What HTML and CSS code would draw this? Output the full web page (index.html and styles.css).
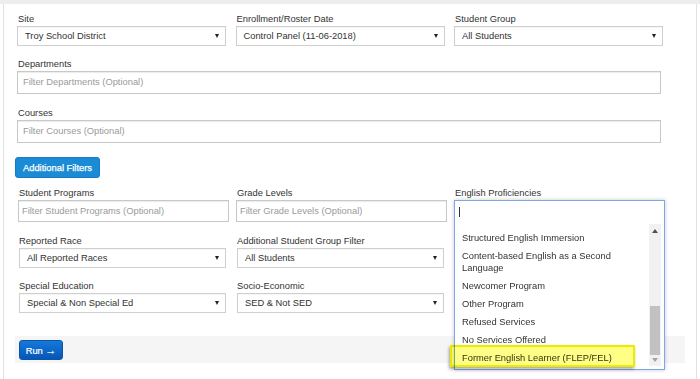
FILE: index.html
```html
<!DOCTYPE html>
<html>
<head>
<meta charset="utf-8">
<link rel="stylesheet" href="styles.css">
</head>
<body>
<div class="topbar"></div>
<div class="frame">
  <div class="row1">
    <div class="field"><label>Site</label><div class="select">Troy School District</div></div>
    <div class="field"><label>Enrollment/Roster Date</label><div class="select">Control Panel (11-06-2018)</div></div>
    <div class="field"><label>Student Group</label><div class="select">All Students</div></div>
  </div>
  <div class="field full departments"><label>Departments</label><div class="input">Filter Departments (Optional)</div></div>
  <div class="field full courses"><label>Courses</label><div class="input">Filter Courses (Optional)</div></div>
  <div class="filters-row"><button class="btn-filters">Additional Filters</button></div>
  <div class="lower">
    <div class="field"><label>Student Programs</label><div class="input">Filter Student Programs (Optional)</div></div>
    <div class="field"><label>Grade Levels</label><div class="input">Filter Grade Levels (Optional)</div></div>
    <div class="field"><label>English Proficiencies</label>
      <div class="dd-wrap">
        <div class="dd">
          <div class="dd-input"><span class="caret"></span></div>
          <div class="dd-list">
            <div class="item">Structured English Immersion</div>
            <div class="item">Content-based English as a Second Language</div>
            <div class="item">Newcomer Program</div>
            <div class="item">Other Program</div>
            <div class="item">Refused Services</div>
            <div class="item">No Services Offered</div>
            <div class="item">Former English Learner (FLEP/FEL)</div>
            <div class="sb"><span class="sb-up"></span><span class="sb-thumb"></span><span class="sb-down"></span></div>
          </div>
          <div class="highlight"></div>
        </div>
      </div>
    </div>
    <div class="field"><label>Reported Race</label><div class="select">All Reported Races</div></div>
    <div class="field"><label>Additional Student Group Filter</label><div class="select">All Students</div></div>
    <div class="field"></div>
    <div class="field"><label>Special Education</label><div class="select">Special &amp; Non Special Ed</div></div>
    <div class="field"><label>Socio-Economic</label><div class="select">SED &amp; Not SED</div></div>
    <div class="field"></div>
  </div>
  <div class="runbar"><button class="btn-run">Run <span class="arrow">&rarr;</span></button></div>
</div>
</body>
</html>
```
FILE: styles.css
```css
body {
  margin: 0;
  font-family: "Liberation Sans", Arial, sans-serif;
  font-size: 9.33px;
  color: #333;
  background: #fff;
}
.topbar {
  height: 4px;
  background: #ededed;
}
.frame {
  margin: 0 3px;
  border-left: 1px solid #e2e2e2;
  border-right: 1px solid #e2e2e2;
  padding: 9px 11px 0;
  height: 375px;
  box-sizing: border-box;
}
.row1 {
  display: grid;
  grid-template-columns: repeat(3, 209px);
  column-gap: 9.5px;
  padding-left: 2px;
}
.field label {
  display: block;
  height: 12px;
  line-height: 12px;
  margin-bottom: 1px;
  padding-left: 1px;
  white-space: nowrap;
}
.select {
  position: relative;
  height: 20px;
  box-sizing: border-box;
  border: 1px solid #cfcfcf;
  line-height: 18px;
  padding-left: 7px;
  background: #fff;
  color: #333;
  box-shadow: inset 0 1px 1px rgba(0,0,0,0.04);
}
.select::after {
  content: "";
  position: absolute;
  right: 6px;
  top: 7px;
  border-left: 2.5px solid transparent;
  border-right: 2.5px solid transparent;
  border-top: 4px solid #222;
}
.input {
  height: 23px;
  box-sizing: border-box;
  border: 1px solid #c8c8c8;
  box-shadow: inset 0 1px 1px rgba(0,0,0,0.08);
  line-height: 21px;
  padding-left: 5px;
  color: #9a9a9a;
  background: #fff;
}
.full {
  margin-left: 2px;
  width: 644px;
}
.departments { margin-top: 12px; }
.courses { margin-top: 13px; }
.filters-row { margin-top: 14px; height: 21px; }
.btn-filters {
  height: 21px;
  padding: 0 7px;
  font: inherit;
  color: #fff;
  background: #1b8bd6;
  border: 1px solid #157dc4;
  border-radius: 3px;
  -webkit-text-stroke: 0.25px #fff;
}
.lower {
  margin-top: 9px;
  display: grid;
  grid-template-columns: repeat(3, 211px);
  column-gap: 7px;
  row-gap: 12.5px;
  padding-left: 3px;
}
.lower .input {
  height: 22px;
  line-height: 20px;
  padding-left: 3px;
}
.lower .select {
  margin: 0 3px 0 1px;
}
.dd-wrap {
  position: relative;
  height: 22px;
}
.dd {
  position: absolute;
  left: 0;
  top: 0;
  width: 100%;
  box-sizing: border-box;
  border: 1px solid #7ca6e4;
  background: #fff;
  box-shadow: 0 0 4px rgba(0,0,0,0.22);
  z-index: 5;
}
.dd-input {
  height: 22px;
  position: relative;
}
.caret {
  position: absolute;
  left: 4px;
  top: 6px;
  width: 1px;
  height: 10px;
  background: #333;
}
.dd-list {
  position: relative;
  margin: 1px 3px 3px 0;
  height: 142px;
  box-sizing: border-box;
  padding: 5px 12px 0 0;
}
.item {
  padding: 3px 4px 3px 7px;
  line-height: 12px;
  color: #333;
}
.sb {
  position: absolute;
  right: 0;
  top: 0;
  bottom: 0;
  width: 12px;
  background: #f1f1f1;
}
.sb-up {
  position: absolute;
  left: 3px;
  top: 5px;
  border-left: 3px solid transparent;
  border-right: 3px solid transparent;
  border-bottom: 4px solid #505050;
}
.sb-thumb {
  position: absolute;
  left: 1px;
  right: 1px;
  top: 82px;
  height: 49px;
  background: #c1c1c1;
}
.sb-down {
  position: absolute;
  left: 3px;
  bottom: 4px;
  border-left: 3px solid transparent;
  border-right: 3px solid transparent;
  border-top: 4px solid #a3a3a3;
}
.highlight {
  position: absolute;
  left: -5px;
  top: 144px;
  width: 185px;
  height: 22px;
  box-sizing: border-box;
  border: 2px solid #ecec00;
  background: #ffff85;
  mix-blend-mode: multiply;
  box-shadow: -1px 2px 3px rgba(0,0,0,0.35);
}
.runbar {
  margin-top: 23px;
  height: 27px;
  box-sizing: border-box;
  padding: 4px;
  background: #f5f5f5;
}
.btn-run {
  height: 20px;
  width: 44px;
  padding: 0;
  font: inherit;
  color: #fff;
  background: linear-gradient(#1479da, #0656b6);
  border: 1px solid #0a55a8;
  border-radius: 3px;
  -webkit-text-stroke: 0.2px #fff;
}
.btn-run .arrow {
  font-size: 11px;
}
```
